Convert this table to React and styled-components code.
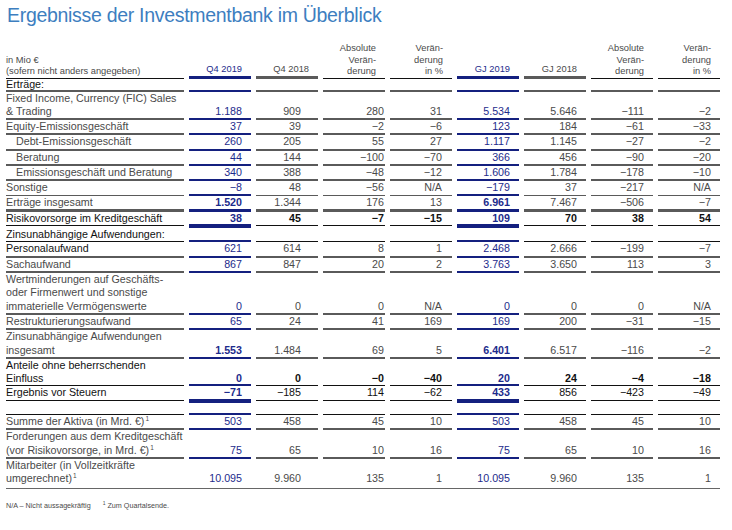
import React from "react";
import styled, { createGlobalStyle } from "styled-components";

const Colors = {
  Title: "#3d7ebf",
  Navy: "#14207f",
  NavyText: "#1d2b8c",
  Gray: "#5a5a5a",
  Text: "#4a4a4a",
  Dark: "#111111",
  Rule: "#666666",
};

const lines = {
  gray: { w: 2, c: Colors.Gray },
  heavy: { w: 3, c: Colors.Gray },
  thin: { w: 1, c: Colors.Gray },
  black: { w: 1, c: Colors.Dark },
  none: { w: 2, c: "transparent" },
};

// value padding per column (the source pdf is not quite regular)
const valuePad = [9, 17, 1, 10, 9, 9, 9, 9];
const headCols = [
  { text: "Q4 2019", hl: true, line: "heavy" },
  { text: "Q4 2018", line: "heavy" },
  { text: "Absolute\nVerän-\nderung", line: "black" },
  { text: "Verän-\nderung\nin %", line: "black" },
  { text: "GJ 2019", hl: true, line: "heavy" },
  { text: "GJ 2018", line: "heavy" },
  { text: "Absolute\nVerän-\nderung", line: "black" },
  { text: "Verän-\nderung\nin %", line: "black" },
];

const rows = [
  { label: "Erträge:", dark: true, tight: true },
  {
    label: "Fixed Income, Currency (FIC) Sales\n& Trading",
    values: ["1.188", "909", "280", "31", "5.534", "5.646", "−111", "−2"],
  },
  {
    label: "Equity-Emissionsgeschäft",
    values: ["37", "39", "−2", "−6", "123", "184", "−61", "−33"],
  },
  {
    label: "Debt-Emissionsgeschäft",
    indent: true,
    values: ["260", "205", "55", "27", "1.117", "1.145", "−27", "−2"],
  },
  {
    label: "Beratung",
    indent: true,
    values: ["44", "144", "−100", "−70", "366", "456", "−90", "−20"],
  },
  {
    label: "Emissionsgeschäft und Beratung",
    indent: true,
    values: ["340", "388", "−48", "−12", "1.606", "1.784", "−178", "−10"],
  },
  {
    label: "Sonstige",
    line: "thin",
    values: ["−8", "48", "−56", "N/A", "−179", "37", "−217", "N/A"],
  },
  {
    label: "Erträge insgesamt",
    line: "heavy",
    hlBold: true,
    values: ["1.520", "1.344", "176", "13", "6.961", "7.467", "−506", "−7"],
  },
  {
    label: "Risikovorsorge im Kreditgeschäft",
    dark: true,
    darkValues: true,
    bold: true,
    line: "black",
    hlThick: true,
    values: ["38", "45", "−7", "−15", "109", "70", "38", "54"],
  },
  { label: "Zinsunabhängige Aufwendungen:", dark: true, line: "black", padTop: 2 },
  {
    label: "Personalaufwand",
    dark: true,
    values: ["621", "614", "8", "1", "2.468", "2.666", "−199", "−7"],
  },
  {
    label: "Sachaufwand",
    values: ["867", "847", "20", "2", "3.763", "3.650", "113", "3"],
  },
  {
    label:
      "Wertminderungen auf Geschäfts-\noder Firmenwert und sonstige\nimmaterielle Vermögenswerte",
    values: ["0", "0", "0", "N/A", "0", "0", "0", "N/A"],
  },
  {
    label: "Restrukturierungsaufwand",
    values: ["65", "24", "41", "169", "169", "200", "−31", "−15"],
  },
  {
    label: "Zinsunabhängige Aufwendungen\ninsgesamt",
    hlBold: true,
    values: ["1.553", "1.484", "69", "5", "6.401", "6.517", "−116", "−2"],
  },
  {
    label: "Anteile ohne beherrschenden\nEinfluss",
    dark: true,
    darkValues: true,
    bold: true,
    line: "black",
    values: ["0", "0", "−0", "−40", "20", "24", "−4", "−18"],
  },
  {
    label: "Ergebnis vor Steuern",
    dark: true,
    darkValues: true,
    hlBold: true,
    line: "black",
    hlThick: true,
    values: ["−71", "−185", "114", "−62", "433", "856", "−423", "−49"],
  },
  { label: "\u00a0", line: "black" },
  {
    label: "Summe der Aktiva (in Mrd. €)",
    sup: true,
    values: ["503", "458", "45", "10", "503", "458", "45", "10"],
  },
  {
    label: "Forderungen aus dem Kreditgeschäft\n(vor Risikovorsorge, in Mrd. €)",
    sup: true,
    values: ["75", "65", "10", "16", "75", "65", "10", "16"],
  },
  {
    label: "Mitarbeiter (in Vollzeitkräfte\numgerechnet)",
    sup: true,
    line: "none",
    values: ["10.095", "9.960", "135", "1", "10.095", "9.960", "135", "1"],
  },
];

const GlobalStyle = createGlobalStyle`
  body {
    margin: 0;
    background: #ffffff;
    font-family: "Liberation Sans", Arial, sans-serif;
  }
`;

const Page = styled.div`
  width: 732px;
  height: 530px;
  box-sizing: border-box;
  padding: 3px 0 0 6px;
  background: #ffffff;
`;

const Title = styled.h1`
  margin: 0 0 16px 1px;
  font-size: 19.5px;
  line-height: 24px;
  letter-spacing: -0.3px;
  font-weight: normal;
  color: ${Colors.Title};
`;

const Table = styled.div`
  display: grid;
  grid-template-columns: 178px repeat(8, 62px);
  column-gap: 5px;
  font-size: 10.7px;
  line-height: 13.3px;
`;

const lineShadow = ({ $line = "gray", $hl, $hlThick }) => {
  if ($line === "none") return "none";
  if ($hl) {
    if ($hlThick) return `inset 0 -2px 0 ${Colors.Navy}, 0 2px 0 ${Colors.Navy}`;
    return `inset 0 -${Math.max(2, lines[$line].w)}px 0 ${Colors.Navy}`;
  }
  return `inset 0 -${lines[$line].w}px 0 ${lines[$line].c}`;
};

const HeadCell = styled.div`
  display: flex;
  align-items: flex-end;
  justify-content: ${(p) => (p.$left ? "flex-start" : "flex-end")};
  padding: 0 ${(p) => (p.$left ? 0 : 9)}px ${(p) => lines[p.$line].w}px 0;
  font-size: 9.3px;
  line-height: 11.5px;
  white-space: pre;
  text-align: ${(p) => (p.$left ? "left" : "right")};
  color: ${(p) => (p.$hl ? Colors.NavyText : Colors.Text)};
  box-shadow: ${lineShadow};
`;

const Label = styled.div`
  padding: ${(p) => p.$padTop || 0}px 0 ${(p) => lines[p.$line].w}px
    ${(p) => (p.$indent ? 10 : 0)}px;
  line-height: ${(p) => (p.$tight ? "11px" : "inherit")};
  white-space: pre;
  color: ${(p) => (p.$dark ? Colors.Dark : Colors.Text)};
  box-shadow: ${lineShadow};
`;

const Value = styled.div`
  display: flex;
  align-items: flex-end;
  justify-content: flex-end;
  padding: 0 ${(p) => p.$pad}px ${(p) => lines[p.$line].w}px 0;
  white-space: nowrap;
  font-weight: ${(p) => (p.$bold ? 700 : 400)};
  color: ${(p) =>
    p.$hl ? Colors.NavyText : p.$dark ? Colors.Dark : Colors.Text};
  box-shadow: ${lineShadow};
`;

const Sup = styled.span`
  font-size: 6.5px;
  line-height: 0;
  vertical-align: 4px;
  margin-left: 1px;
`;

const Rule = styled.div`
  grid-column: 1 / -1;
  height: 1px;
  background: ${Colors.Rule};
`;

const Footnote = styled.div`
  display: flex;
  gap: 12px;
  margin-top: 12px;
  font-size: 7.2px;
  line-height: 10px;
  color: ${Colors.Text};

  sup {
    font-size: 5px;
    vertical-align: 3px;
    line-height: 0;
    margin-right: 2px;
  }
`;

const HIGHLIGHT = [0, 4];
const EMPTY = ["", "", "", "", "", "", "", ""];

function TableRow({ row }) {
  const line = row.line || "gray";
  const values = row.values || EMPTY;
  return (
    <>
      <Label
        $line={line}
        $dark={row.dark}
        $indent={row.indent}
        $tight={row.tight}
        $padTop={row.padTop}
      >
        {row.label}
        {row.sup && <Sup>1</Sup>}
      </Label>
      {values.map((v, i) => {
        const hl = HIGHLIGHT.includes(i);
        return (
          <Value
            key={i}
            $line={line}
            $hl={hl}
            $hlThick={row.hlThick}
            $pad={valuePad[i]}
            $dark={row.darkValues}
            $bold={row.bold || (hl && row.hlBold)}
          >
            {v}
          </Value>
        );
      })}
    </>
  );
}

export default function App() {
  return (
    <Page>
      <GlobalStyle />
      <Title>Ergebnisse der Investmentbank im Überblick</Title>
      <Table>
        <HeadCell $left $line="black">
          {"in Mio €\n(sofern nicht anders angegeben)"}
        </HeadCell>
        {headCols.map((c, i) => (
          <HeadCell key={i} $line={c.line} $hl={c.hl}>
            {c.text}
          </HeadCell>
        ))}
        {rows.map((row, i) => (
          <TableRow key={i} row={row} />
        ))}
        <Rule />
      </Table>
      <Footnote>
        <span>N/A – Nicht aussagekräftig</span>
        <span>
          <sup>1</sup>Zum Quartalsende.
        </span>
      </Footnote>
    </Page>
  );
}
